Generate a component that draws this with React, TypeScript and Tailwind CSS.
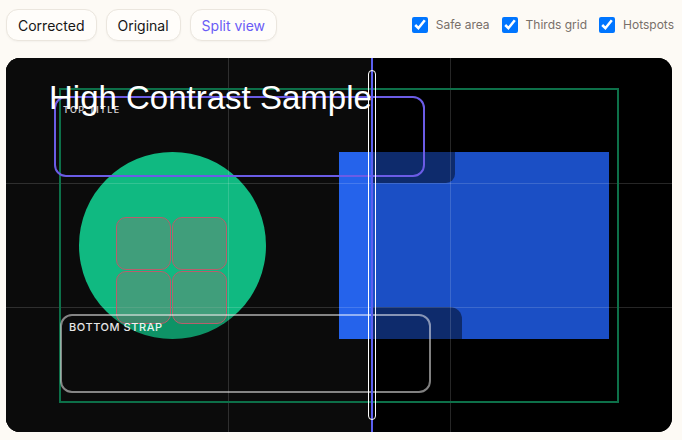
import { useState } from "react";

type Mode = "corrected" | "original" | "split";

const MODES: { id: Mode; label: string }[] = [
  { id: "corrected", label: "Corrected" },
  { id: "original", label: "Original" },
  { id: "split", label: "Split view" },
];

/** One full-size render of the frame. `corrected` swaps in the fixed colours + text scrims. */
function Scene({ corrected }: { corrected: boolean }) {
  return (
    <div className={`absolute left-0 top-0 h-[374px] w-[666px] ${corrected ? "bg-black" : "bg-[#0b0b0b]"}`}>
      <div className="absolute left-[73px] top-[94px] h-[187px] w-[187px] rounded-full bg-[linear-gradient(to_bottom,#10b981_162px,#0e9366_162px)]" />
      <div
        className={`absolute left-[333px] top-[94px] h-[187px] w-[270px] ${corrected ? "bg-[#1b4fc5]" : "bg-[#2563eb]"}`}
      />
      {corrected && (
        <>
          <div className="absolute left-[40px] top-[28px] h-[97px] w-[409px] rounded-[9px] bg-black/45" />
          <div className="absolute left-[48px] top-[249px] h-[95px] w-[408px] rounded-[12px] bg-black/45" />
        </>
      )}
    </div>
  );
}

function Overlays({ safe, grid, hotspots }: { safe: boolean; grid: boolean; hotspots: boolean }) {
  return (
    <>
      {grid && (
        <>
          <div className="absolute inset-y-0 left-[222px] w-px bg-white/15" />
          <div className="absolute inset-y-0 left-[444px] w-px bg-white/15" />
          <div className="absolute inset-x-0 top-[125px] h-px bg-white/15" />
          <div className="absolute inset-x-0 top-[249px] h-px bg-white/15" />
        </>
      )}
      {safe && (
        <div className="absolute left-[53px] top-[30px] h-[315px] w-[560px] border-2 border-[#0d7049]" />
      )}
      {hotspots && (
        <>
          <div className="absolute left-[110px] top-[159px] grid grid-cols-2 gap-px">
            {[0, 1, 2, 3].map((i) => (
              <div
                key={i}
                className="h-[53px] w-[55px] rounded-[10px] border border-[#b85e6c] bg-[rgba(128,124,116,0.43)]"
              />
            ))}
          </div>
          <div className="absolute left-[48px] top-[38px] h-[81px] w-[371px] rounded-[12px] border-2 border-[#6b5ce6]">
            <span className="absolute left-[7px] top-[7px] text-[9px] font-medium uppercase leading-none tracking-[0.15em] text-white/85">
              Top title
            </span>
          </div>
          <div className="absolute left-[54px] top-[256px] h-[79px] w-[371px] rounded-[12px] border-2 border-white/50">
            <span className="absolute left-[7px] top-[6px] text-[11px] font-medium uppercase leading-none tracking-[0.05em] text-white/90">
              Bottom strap
            </span>
          </div>
        </>
      )}
    </>
  );
}

export default function App() {
  const [mode, setMode] = useState<Mode>("split");
  const [safe, setSafe] = useState(true);
  const [grid, setGrid] = useState(true);
  const [hotspots, setHotspots] = useState(true);

  const checks = [
    { label: "Safe area", value: safe, set: setSafe },
    { label: "Thirds grid", value: grid, set: setGrid },
    { label: "Hotspots", value: hotspots, set: setHotspots },
  ];

  return (
    <div className="h-[440px] w-[682px] bg-[#fdfaf5] px-[6px] pt-[9px] font-['Inter',sans-serif]">
      {/* Toolbar */}
      <div className="flex h-8 items-center justify-between">
        <div className="flex gap-[9px]">
          {MODES.map((m) => (
            <button
              key={m.id}
              type="button"
              onClick={() => setMode(m.id)}
              className={`h-8 rounded-[12px] border border-[#ebe6de] bg-[#fffdfa] px-[11px] text-[14px] shadow-[0_1px_2px_rgba(0,0,0,0.04)] ${
                mode === m.id ? "text-[#6a5cf6]" : "text-[#161616]"
              }`}
            >
              {m.label}
            </button>
          ))}
        </div>
        <div className="flex items-center gap-3 pr-[2px]">
          {checks.map((c) => (
            <label key={c.label} className="flex items-center gap-2 text-[12px] text-[#786f69]">
              <input
                type="checkbox"
                checked={c.value}
                onChange={(e) => c.set(e.target.checked)}
                className="m-0 h-4 w-4"
              />
              {c.label}
            </label>
          ))}
        </div>
      </div>

      {/* Preview canvas */}
      <div className="relative mt-[17px] h-[374px] w-[666px] overflow-hidden rounded-[14px] bg-black">
        {mode !== "original" && <Scene corrected />}
        {mode !== "corrected" && (
          <div className={`absolute inset-y-0 left-0 overflow-hidden ${mode === "split" ? "w-[366px]" : "w-[666px]"}`}>
            <Scene corrected={false} />
          </div>
        )}

        <Overlays safe={safe} grid={grid} hotspots={hotspots} />

        <div className="absolute inset-y-0 left-0 w-[366px] overflow-hidden">
          <div className="absolute left-[43px] top-[23px] whitespace-nowrap font-['Liberation_Sans',Arial,sans-serif] text-[33px] leading-none text-white">
            High Contrast Sample
          </div>
        </div>

        {mode === "split" && (
          <>
            <div className="absolute inset-y-0 left-[365px] w-[1.5px] bg-[#5b5ff0]" />
            <div className="absolute left-[362px] top-[12px] h-[350px] w-[8px] rounded-full border-[1.5px] border-white" />
          </>
        )}
      </div>
    </div>
  );
}
